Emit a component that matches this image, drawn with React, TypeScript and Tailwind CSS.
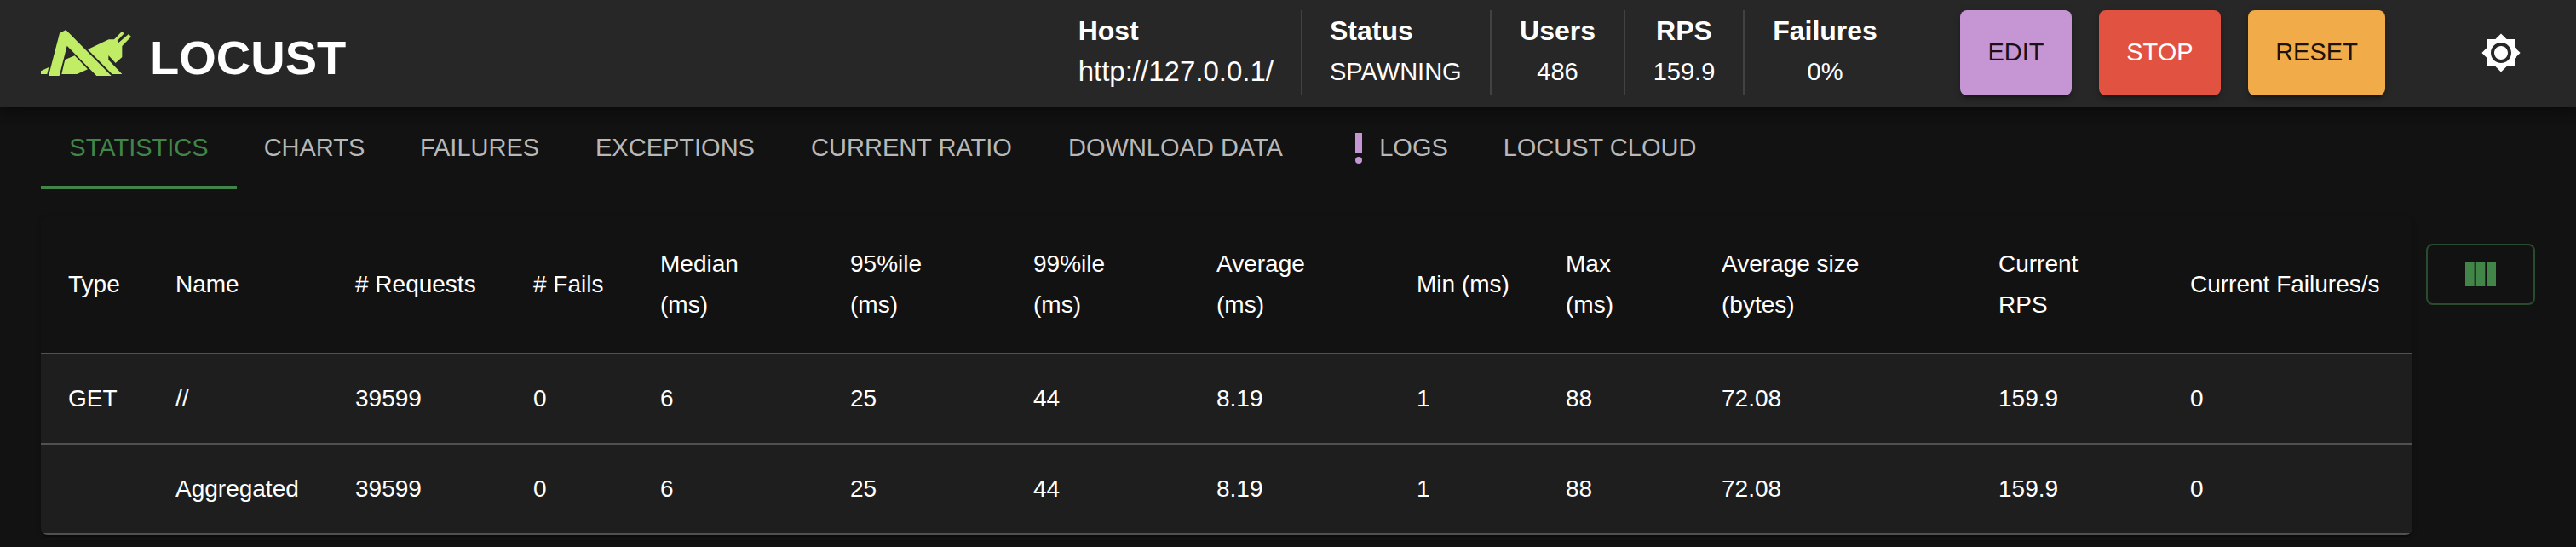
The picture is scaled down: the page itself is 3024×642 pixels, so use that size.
import type { ReactNode } from 'react';

const tabs = [
  { label: 'STATISTICS', width: 'min-w-[230px]' },
  { label: 'CHARTS', width: 'min-w-[182px]' },
  { label: 'FAILURES', width: 'min-w-[206px]' },
  { label: 'EXCEPTIONS', width: 'min-w-[253px]' },
  { label: 'CURRENT RATIO', width: 'min-w-[302px]' },
  { label: 'DOWNLOAD DATA', width: 'min-w-[318px]' },
  { label: 'LOGS', width: 'min-w-[193px]', alert: true },
  { label: 'LOCUST CLOUD', width: 'min-w-[292px]' },
];

const columns = [
  { lines: ['Type'], width: 'w-[126px]' },
  { lines: ['Name'], width: 'w-[211px]' },
  { lines: ['# Requests'], width: 'w-[209px]' },
  { lines: ['# Fails'], width: 'w-[149px]' },
  { lines: ['Median', '(ms)'], width: 'w-[223px]' },
  { lines: ['95%ile', '(ms)'], width: 'w-[215px]' },
  { lines: ['99%ile', '(ms)'], width: 'w-[215px]' },
  { lines: ['Average', '(ms)'], width: 'w-[235px]' },
  { lines: ['Min (ms)'], width: 'w-[175px]' },
  { lines: ['Max', '(ms)'], width: 'w-[183px]' },
  { lines: ['Average size', '(bytes)'], width: 'w-[325px]' },
  { lines: ['Current', 'RPS'], width: 'w-[225px]' },
  { lines: ['Current Failures/s'], width: 'w-[293px]' },
];

const rows = [
  ['GET', '//', '39599', '0', '6', '25', '44', '8.19', '1', '88', '72.08', '159.9', '0'],
  ['', 'Aggregated', '39599', '0', '6', '25', '44', '8.19', '1', '88', '72.08', '159.9', '0'],
];

function Logo() {
  return (
    <a href="#home" className="flex items-center gap-[22px] text-white">
      <svg viewBox="144 105 318 162" className="h-[54px] w-[106px] fill-[#c1ed66]" aria-hidden="true">
        <path d="M232 105 210 117 171 267H209L236 161 340 267H392Z" />
        <path d="M144 250 172 237 166 261H144Z" />
        <path d="M229 210 263 196 309 244 271 261H217Z" />
        <path d="M309 174 383 139H402L429 111 437 118 413 144 418 150 453 120 462 129 430 162V201L407 222 382 195V211L430 261H395Z" />
      </svg>
      <span className="pt-3 text-[56px] leading-none font-bold">LOCUST</span>
    </a>
  );
}

function Stat({ label, className, children }: { label: string; className: string; children: ReactNode }) {
  return (
    <div className={`flex flex-col text-[29px] leading-[48px] ${className}`}>
      <span className="text-[32px] font-bold">{label}</span>
      {children}
    </div>
  );
}

function ActionButton({ className, children }: { className: string; children: ReactNode }) {
  return (
    <button
      type="button"
      className={`rounded-lg text-[29px] shadow-[0_6px_2px_-4px_rgba(0,0,0,0.2),0_4px_4px_rgba(0,0,0,0.14),0_2px_10px_rgba(0,0,0,0.12)] ${className}`}
    >
      {children}
    </button>
  );
}

function Header() {
  return (
    <header className="relative flex items-stretch justify-between bg-[#272727] px-12 pt-3 pb-3.5 shadow-[0_4px_8px_-2px_rgba(0,0,0,0.2),0_8px_10px_rgba(0,0,0,0.14),0_2px_20px_rgba(0,0,0,0.12)]">
      <Logo />
      <div className="flex min-h-[100px] items-stretch">
        <div className="flex divide-x-2 divide-[#424242]">
          <Stat label="Host" className="min-w-[262px] pr-8">
            <span className="text-[33px]">http://127.0.0.1/</span>
          </Stat>
          <Stat label="Status" className="min-w-[222px] pl-8">
            <span>SPAWNING</span>
          </Stat>
          <Stat label="Users" className="min-w-[157px] items-center">
            <span>486</span>
          </Stat>
          <Stat label="RPS" className="min-w-[140px] items-center">
            <span>159.9</span>
          </Stat>
          <Stat label="Failures" className="min-w-[189px] items-center">
            <span>0%</span>
          </Stat>
        </div>
        <div className="ml-16 flex gap-8">
          <ActionButton className="min-w-[131px] bg-[#c696d4] text-[#17121a]">EDIT</ActionButton>
          <ActionButton className="min-w-[143px] bg-[#e15241] text-white">STOP</ActionButton>
          <ActionButton className="min-w-[161px] bg-[#f2ab49] text-[#1c140a]">RESET</ActionButton>
        </div>
        <button type="button" aria-label="Toggle theme" className="ml-24 self-center p-4">
          <svg viewBox="0 0 24 24" className="size-12 fill-white" aria-hidden="true">
            <path d="M20 8.69V4h-4.69L12 .69 8.69 4H4v4.69L.69 12 4 15.31V20h4.69L12 23.31 15.31 20H20v-4.69L23.31 12zM12 18c-3.31 0-6-2.69-6-6s2.69-6 6-6 6 2.69 6 6-2.69 6-6 6m0-10c-2.21 0-4 1.79-4 4s1.79 4 4 4 4-1.79 4-4-1.79-4-4-4" />
          </svg>
        </button>
      </div>
    </header>
  );
}

function Tabs() {
  return (
    <div role="tablist" className="flex h-24 text-[29px]">
      {tabs.map((tab, i) => (
        <button
          key={tab.label}
          type="button"
          role="tab"
          aria-selected={i === 0}
          className={`flex items-center justify-center border-y-4 border-t-transparent whitespace-nowrap ${tab.width} ${
            i === 0 ? 'border-b-[#418549] text-[#418549]' : 'border-b-transparent text-[#b8b8b8]'
          }`}
        >
          {tab.alert && (
            <svg viewBox="0 0 24 24" className="size-12 fill-[#c696d4]" aria-hidden="true">
              <circle cx="12" cy="19" r="2" />
              <path d="M10 3h4v12h-4z" />
            </svg>
          )}
          {tab.label}
        </button>
      ))}
    </div>
  );
}

function StatsTable() {
  return (
    <div className="grow overflow-hidden rounded-lg shadow-[0_4px_2px_-2px_rgba(0,0,0,0.2),0_2px_2px_rgba(0,0,0,0.14),0_2px_6px_rgba(0,0,0,0.12)]">
      <table className="w-full table-fixed border-collapse text-left text-[28px]">
        <thead>
          <tr className="border-b-2 border-[#515151] bg-[#121212] leading-[48px]">
            {columns.map((column) => (
              <th key={column.lines[0]} scope="col" className={`py-8 pl-8 font-normal whitespace-nowrap ${column.width}`}>
                {column.lines.map((line) => (
                  <span key={line} className="block">
                    {line}
                  </span>
                ))}
              </th>
            ))}
          </tr>
        </thead>
        <tbody>
          {rows.map((row) => (
            <tr key={row[1]} className="border-b-2 border-[#515151] bg-[#1e1e1e] leading-10">
              {row.map((value, i) => (
                <td key={columns[i].lines[0]} className="py-8 pl-8">
                  {value}
                </td>
              ))}
            </tr>
          ))}
        </tbody>
      </table>
    </div>
  );
}

export default function App() {
  return (
    <div className="min-h-screen bg-[#121212] font-['Liberation_Sans',Arial,sans-serif] text-white">
      <Header />
      <main className="px-12">
        <Tabs />
        <div className="flex items-start gap-4 pt-8">
          <StatsTable />
          <button
            type="button"
            aria-label="Select columns"
            className="mt-8 flex h-[72px] w-32 shrink-0 items-center justify-center rounded-lg border-2 border-[#2a4c2e]"
          >
            <svg viewBox="0 0 24 24" className="size-12 fill-[#418549]" aria-hidden="true">
              <path d="M14.67 5v14H9.33V5zm1 14H21V5h-5.33zm-7.34 0V5H3v14z" />
            </svg>
          </button>
        </div>
      </main>
    </div>
  );
}
